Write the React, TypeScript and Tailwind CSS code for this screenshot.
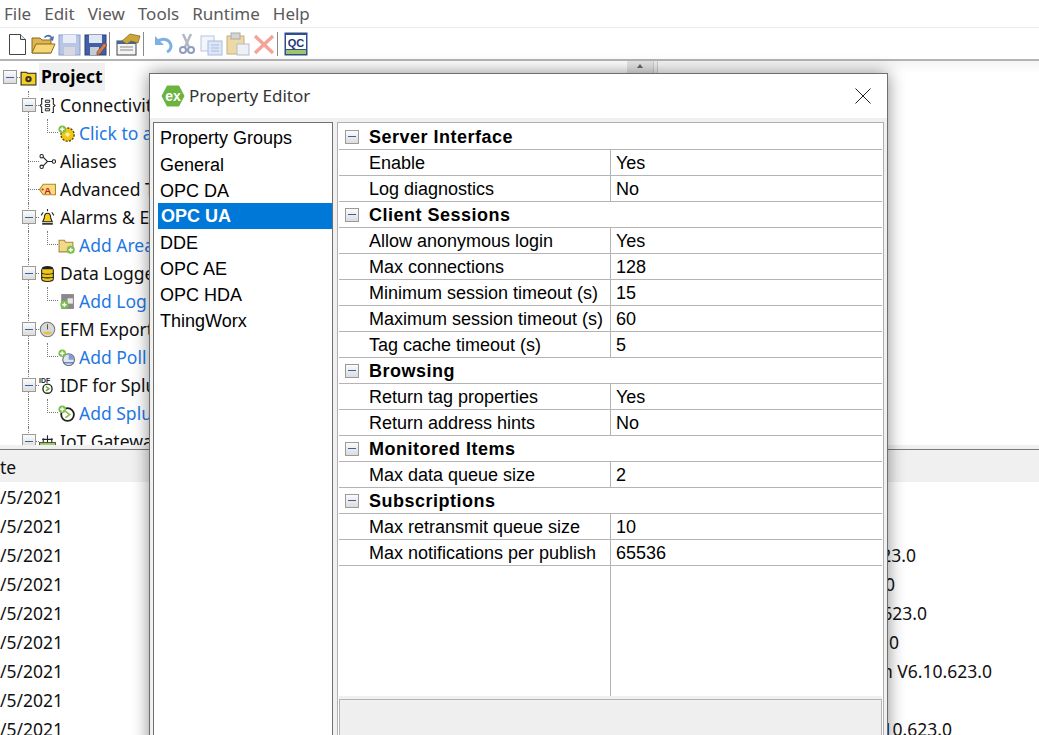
import type { ReactNode } from 'react';

const menus = ['File', 'Edit', 'View', 'Tools', 'Runtime', 'Help'];

const groups = ['General', 'OPC DA', 'OPC UA', 'DDE', 'OPC AE', 'OPC HDA', 'ThingWorx'];

const sections = [
  { title: 'Server Interface', rows: [['Enable', 'Yes'], ['Log diagnostics', 'No']] },
  {
    title: 'Client Sessions',
    rows: [
      ['Allow anonymous login', 'Yes'],
      ['Max connections', '128'],
      ['Minimum session timeout (s)', '15'],
      ['Maximum session timeout (s)', '60'],
      ['Tag cache timeout (s)', '5'],
    ],
  },
  { title: 'Browsing', rows: [['Return tag properties', 'Yes'], ['Return address hints', 'No']] },
  { title: 'Monitored Items', rows: [['Max data queue size', '2']] },
  { title: 'Subscriptions', rows: [['Max retransmit queue size', '10'], ['Max notifications per publish', '65536']] },
];

const logRows = [
  { msg: '', end: 'mr-0' },
  { msg: '', end: 'mr-0' },
  { msg: 'Runtime service started V6.10.623.0', end: 'mr-[123px]' },
  { msg: 'Configuration V6.10.623.0', end: 'mr-[144px]' },
  { msg: 'Runtime plug-in started V6.10.623.0', end: 'mr-[112px]' },
  { msg: 'Configuration V6.10.623.0', end: 'mr-[140px]' },
  { msg: 'OPC UA Server Version V6.10.623.0', end: 'mr-[47px]' },
  { msg: '', end: 'mr-0' },
  { msg: 'Runtime plug-in started V6.10.623.0', end: 'mr-[87px]' },
];

function Toggle() {
  return (
    <span className="relative z-10 flex h-[14px] w-[14px] shrink-0 items-center justify-center border border-[#9a9a9a] bg-gradient-to-b from-[#fbfbfb] to-[#dcdcdc]">
      <span className="h-px w-[8px] bg-[#3a5fa8]" />
    </span>
  );
}

function Icon({ children }: { children: ReactNode }) {
  return (
    <svg width={17} height={17} viewBox="0 0 16 16" className="shrink-0">
      {children}
    </svg>
  );
}

const AddBadge = () => (
  <>
    <circle cx="4" cy="4" r="3.6" fill="#7cc04b" />
    <path d="M4 2v4M2 4h4" stroke="#fff" strokeWidth="1.3" />
  </>
);

const treeIcons: Record<string, ReactNode> = {
  project: (
    <Icon>
      <path d="M1 3h5l1 1h8v11H1z" fill="#f5d020" stroke="#222" />
      <circle cx="8" cy="9.5" r="3" fill="#333" />
      <circle cx="8" cy="9.5" r="1" fill="#f5d020" />
    </Icon>
  ),
  conn: (
    <Icon>
      <path d="M4 1.5H2.500v5L1 8l1.500 1.500v5H4M12 1.500h1.500v5L15 8l-1.500 1.500v5H12" fill="none" stroke="#222" />
      <path d="M6 3h4v2H6zM6 7h4v2H6zM6 11h4v2H6z" fill="none" stroke="#222" strokeWidth="0.9" />
    </Icon>
  ),
  gear: (
    <Icon>
      <circle cx="9" cy="9" r="6.200" fill="#f0c814" stroke="#6a5000" strokeWidth="1.400" strokeDasharray="2 1.200" />
      <circle cx="9" cy="9" r="2" fill="#fff2a0" />
      <AddBadge />
    </Icon>
  ),
  alias: (
    <Icon>
      <path d="M3 3l5 5-5 5M8 8h5" fill="none" stroke="#222" />
      <circle cx="2.500" cy="3" r="1.600" fill="#fff" stroke="#222" />
      <circle cx="2.500" cy="13" r="1.600" fill="#fff" stroke="#222" />
      <circle cx="14" cy="8" r="1.600" fill="#fff" stroke="#222" />
    </Icon>
  ),
  tag: (
    <Icon>
      <path d="M0.500 8L4 3h11.500v10H4z" fill="#f7dd80" stroke="#b4862a" />
      <text x="5" y="12" fontSize="9" fontWeight="700" fill="#c02020" fontFamily="Liberation Sans, sans-serif">A</text>
      <circle cx="3.400" cy="8" r="1" fill="#c02020" />
    </Icon>
  ),
  bell: (
    <Icon>
      <path d="M8 4c-2.500 0-3 2-3 4.500L3.500 12h9L11 8.500C11 6 10.500 4 8 4z" fill="#f3cf1c" stroke="#222" />
      <path d="M3 14h10" stroke="#222" strokeWidth="1.500" />
      <path d="M2 6l2-3M14 6l-2-3M8 2V0" stroke="#222" />
    </Icon>
  ),
  folderAdd: (
    <Icon>
      <path d="M1 3h5l1 2h7v9H1z" fill="#f2d88b" stroke="#a88a3a" />
      <circle cx="12" cy="12" r="3.800" fill="#7cc04b" />
      <path d="M12 10v4M10 12h4" stroke="#fff" strokeWidth="1.300" />
    </Icon>
  ),
  db: (
    <Icon>
      <ellipse cx="8" cy="3.500" rx="5.500" ry="2.500" fill="#222" />
      <path d="M2.500 4v9c0 1.500 2.500 2.500 5.500 2.500s5.500-1 5.500-2.500V4" fill="#f0c814" stroke="#222" />
      <path d="M2.500 7.500c1 1.500 10 1.500 11 0M2.500 11c1 1.500 10 1.500 11 0" fill="none" stroke="#222" />
    </Icon>
  ),
  logAdd: (
    <Icon>
      <rect x="3" y="1" width="12" height="14" fill="#8a8a8a" />
      <rect x="9" y="5" width="5" height="5" fill="#e8e8e8" />
      <circle cx="6" cy="11" r="3.800" fill="#7cc04b" />
      <path d="M6 9v4M4 11h4" stroke="#fff" strokeWidth="1.300" />
    </Icon>
  ),
  gauge: (
    <Icon>
      <circle cx="8" cy="8" r="6.800" fill="#d8d8d8" stroke="#777" />
      <path d="M3.500 10a5 5 0 0 0 9 0z" fill="#e8c040" />
      <path d="M8 8V3" stroke="#555" />
    </Icon>
  ),
  pollAdd: (
    <Icon>
      <circle cx="10" cy="10" r="5.500" fill="#dfe6f2" stroke="#667" />
      <path d="M10 5v5h5a5 5 0 0 0-5-5z" fill="#7f9be0" />
      <path d="M5 13h10" stroke="#3a5fa8" />
      <AddBadge />
    </Icon>
  ),
  idf: (
    <Icon>
      <text x="0" y="5.500" fontSize="6.500" fontWeight="700" fill="#222" fontFamily="Liberation Sans, sans-serif">IDF</text>
      <circle cx="8" cy="11" r="4.300" fill="#fff" stroke="#222" strokeWidth="1.300" />
      <path d="M6.500 9l3 2-3 2" fill="none" stroke="#6aa82a" strokeWidth="1.300" />
    </Icon>
  ),
  splunkAdd: (
    <Icon>
      <circle cx="9" cy="9" r="6" fill="#fff" stroke="#222" strokeWidth="1.700" />
      <path d="M7 6l4 3-4 3" fill="none" stroke="#8cc04b" strokeWidth="1.500" />
      <AddBadge />
    </Icon>
  ),
  iot: (
    <Icon>
      <rect x="0.500" y="9" width="15" height="4" fill="#a8d060" stroke="#456" />
      <path d="M8 2v7M4 5v4M12 5v4M3 6h10" stroke="#222" />
    </Icon>
  ),
};

type TreeItem = { label: string; icon: string; level: number; toggle?: boolean; link?: boolean };

const tree: TreeItem[] = [
  { label: 'Connectivity', icon: 'conn', level: 1, toggle: true },
  { label: 'Click to add a channel.', icon: 'gear', level: 2, link: true },
  { label: 'Aliases', icon: 'alias', level: 1 },
  { label: 'Advanced Tags', icon: 'tag', level: 1 },
  { label: 'Alarms & Events', icon: 'bell', level: 1, toggle: true },
  { label: 'Add Area...', icon: 'folderAdd', level: 2, link: true },
  { label: 'Data Logger', icon: 'db', level: 1, toggle: true },
  { label: 'Add Log Group...', icon: 'logAdd', level: 2, link: true },
  { label: 'EFM Exporter', icon: 'gauge', level: 1, toggle: true },
  { label: 'Add Poll Group...', icon: 'pollAdd', level: 2, link: true },
  { label: 'IDF for Splunk', icon: 'idf', level: 1, toggle: true },
  { label: 'Add Splunk Connection...', icon: 'splunkAdd', level: 2, link: true },
  { label: 'IoT Gateway', icon: 'iot', level: 1, toggle: true },
];

function TreeRow({ item }: { item: TreeItem }) {
  if (item.level === 2) {
    return (
      <div className="relative flex h-7 items-center pl-[58px]">
        <span className="absolute left-[28px] top-0 h-full border-l border-dotted border-[#777]" />
        <span className="absolute left-[47px] top-0 h-[14px] w-[11px] border-b border-l border-dotted border-[#777]" />
        {treeIcons[item.icon]}
        <span className="ml-[4px] whitespace-nowrap text-[#1f78e4]">{item.label}</span>
      </div>
    );
  }
  return (
    <div className="relative flex h-7 items-center pl-[22px]">
      <span className="absolute left-[28px] top-0 h-full border-l border-dotted border-[#777]" />
      {item.toggle ? (
        <>
          <Toggle />
          <span className="w-[3px] border-t border-dotted border-[#777]" />
        </>
      ) : (
        <span className="ml-[6px] w-[11px] border-t border-dotted border-[#777]" />
      )}
      {treeIcons[item.icon]}
      <span className="ml-[4px] whitespace-nowrap text-[#111]">{item.label}</span>
    </div>
  );
}

function Toolbar() {
  return (
    <div className="flex h-[33px] shrink-0 items-center border-b-2 border-[#b4b4b4] bg-white pl-[8px]">
      {/* new */}
      <svg width="19" height="24" viewBox="0 0 19 24" className="shrink-0">
        <path d="M1.500 2.500h11l5 5v15h-16z" fill="#fff" stroke="#444" />
        <path d="M12.500 2.500v5h5" fill="#dfe6ee" stroke="#444" />
      </svg>
      {/* open */}
      <svg width="25" height="24" viewBox="0 0 25 24" className="ml-[4px] shrink-0">
        <path d="M1 6h8l2 2h9v13H1z" fill="#e0b450" stroke="#8a6a20" />
        <path d="M1 21l4-9h19l-4 9z" fill="#f6d778" stroke="#8a6a20" />
        <path d="M13 5c3-3 6-3 8 0l2-1-1 5-4-2 2-1c-2-2-4-2-6 0z" fill="#4a6ea8" />
      </svg>
      {/* save */}
      <svg width="23" height="24" viewBox="0 0 23 24" className="ml-[2px] shrink-0">
        <rect x="1" y="3" width="21" height="20" fill="#b8c6e6" stroke="#8a9cc8" />
        <rect x="5" y="3" width="13" height="8" fill="#e8edf8" />
        <rect x="6" y="15" width="11" height="8" fill="#d8d8e0" />
      </svg>
      {/* save as */}
      <svg width="23" height="24" viewBox="0 0 23 24" className="ml-[3px] shrink-0">
        <rect x="1" y="3" width="21" height="20" fill="#3f5fa8" stroke="#2a3f78" />
        <rect x="5" y="3" width="13" height="8" fill="#dfe6f4" />
        <rect x="6" y="15" width="9" height="8" fill="#c8ccd4" />
        <path d="M13 20l7-9 3 2-7 9-3 1z" fill="#d8794a" stroke="#6a3a20" strokeWidth="0.600" />
      </svg>
      <span className="ml-[2px] h-[24px] w-px bg-[#8a8a8a]" />
      {/* properties */}
      <svg width="25" height="24" viewBox="0 0 25 24" className="ml-[6px] shrink-0">
        <rect x="1" y="9" width="19" height="14" fill="#f4f4f4" stroke="#444" />
        <path d="M1 9h19v3H1z" fill="#44659c" />
        <path d="M4 15h13M4 18h13" stroke="#888" />
        <path d="M6 9l8-7 10 2-2 7-7-2-4 3z" fill="#c9a53a" stroke="#7a6010" strokeWidth="0.700" />
      </svg>
      <span className="ml-[2px] h-[24px] w-px bg-[#8a8a8a]" />
      {/* undo */}
      <svg width="20" height="24" viewBox="0 0 20 24" className="ml-[10px] shrink-0">
        <path d="M3 10c5-5 13-3 14 4 0 3-2 5-4 6" fill="none" stroke="#7fb0e4" strokeWidth="3" />
        <path d="M1 4v9h9z" fill="#7fb0e4" />
      </svg>
      {/* cut */}
      <svg width="16" height="24" viewBox="0 0 16 24" className="ml-[5px] shrink-0">
        <path d="M4 2l6 13M12 2L6 15" stroke="#b4b8c2" strokeWidth="2.500" />
        <circle cx="4" cy="18" r="3" fill="none" stroke="#8d9cc0" strokeWidth="2" />
        <circle cx="12" cy="18" r="3" fill="none" stroke="#8d9cc0" strokeWidth="2" />
      </svg>
      {/* copy */}
      <svg width="23" height="24" viewBox="0 0 23 24" className="ml-[5px] shrink-0">
        <rect x="1" y="4" width="13" height="15" fill="#f2f5fb" stroke="#b8c4dc" />
        <rect x="8" y="9" width="14" height="14" fill="#dde6f6" stroke="#a8bce0" />
        <path d="M11 13h8M11 16h8M11 19h8" stroke="#a8bce0" />
      </svg>
      {/* paste */}
      <svg width="24" height="24" viewBox="0 0 24 24" className="ml-[3px] shrink-0">
        <rect x="1" y="4" width="17" height="18" fill="#ecd9a6" stroke="#c4b07c" />
        <rect x="5" y="1" width="9" height="6" fill="#d4d4d4" stroke="#aaa" />
        <rect x="11" y="12" width="12" height="11" fill="#eef0f4" stroke="#b4bccc" />
      </svg>
      {/* delete */}
      <svg width="22" height="24" viewBox="0 0 22 24" className="ml-[3px] shrink-0">
        <path d="M2 4l18 17M20 4L2 21" stroke="#f4a49a" strokeWidth="3.500" />
      </svg>
      <span className="ml-[2px] h-[24px] w-px bg-[#8a8a8a]" />
      {/* quick client */}
      <svg width="24" height="24" viewBox="0 0 24 24" className="ml-[6px] shrink-0">
        <rect x="0.500" y="0.500" width="23" height="23" fill="#2e4f8c" />
        <rect x="2" y="3" width="20" height="14" fill="#fff" />
        <text x="12" y="14.500" textAnchor="middle" fontSize="11" fontWeight="700" fill="#1c3a78" fontFamily="Liberation Sans, sans-serif">QC</text>
        <rect x="2" y="18" width="20" height="4" fill="#9fc46a" />
      </svg>
    </div>
  );
}

function PropertyDialog() {
  return (
    <div className="absolute left-[149px] top-[73px] flex h-[680px] w-[739px] flex-col border border-[#6e6e6e] bg-[#f0f0f0] shadow-[0_0_16px_rgba(0,0,0,0.45)] [font-family:'Liberation_Sans',sans-serif]">
      <div className="flex h-[44px] shrink-0 items-center bg-white pl-[11px] pr-[16px]">
        <svg width="24" height="24" viewBox="0 0 24 24" className="shrink-0">
          <path d="M6 1.500h12L23.500 12 18 22.500H6L0.500 12z" fill="#6cb33f" />
          <text x="12" y="16.500" textAnchor="middle" fontSize="14" fontWeight="700" fill="#fff" fontFamily="Liberation Sans, sans-serif">ex</text>
        </svg>
        <span className="ml-[4px] text-[17px] text-[#333] [font-family:'Noto_Sans',sans-serif]">Property Editor</span>
        <svg width="16" height="16" viewBox="0 0 16 16" className="ml-auto shrink-0">
          <path d="M0.500 0.500l15 15M15.500 0.500l-15 15" stroke="#222" strokeWidth="1" />
        </svg>
      </div>
      <div className="flex min-h-0 flex-1 pl-[3px] pr-[3px] pt-[4px] text-[18px] text-black">
        <div className="w-[180px] shrink-0 border border-[#707070] bg-white pl-[4px] pt-[2px]">
          <div className="flex h-[26px] items-center pl-[2px] pt-[1px]">Property Groups</div>
          {groups.map((g) => (
            <div
              key={g}
              className={
                g === 'OPC UA'
                  ? 'flex h-[26px] items-center bg-[#0078d7] pl-[3px] pt-[1px] font-bold text-white'
                  : 'flex h-[26px] items-center pl-[2px] pt-[3px]'
              }
            >
              {g}
            </div>
          ))}
        </div>
        <div className="ml-[4px] flex min-w-0 flex-1 flex-col border border-[#b0b0b0] bg-white pl-px pr-px pt-px">
          {sections.map((s) => (
            <div key={s.title}>
              <div className="flex h-[26px] items-center border-b border-[#b4b4b4] pl-[6px]">
                <Toggle />
                <span className="ml-[10px] pt-[2px] font-bold tracking-[0.5px]">{s.title}</span>
              </div>
              {s.rows.map(([k, v]) => (
                <div key={k} className="flex h-[26px] border-b border-[#b4b4b4]">
                  <div className="flex w-[271px] shrink-0 items-center pl-[30px] pt-[2px]">{k}</div>
                  <div className="flex flex-1 items-center border-l border-[#b4b4b4] pl-[5px] pt-[2px]">{v}</div>
                </div>
              ))}
            </div>
          ))}
          <div className="h-[130px] w-[272px] shrink-0 border-r border-[#b4b4b4]" />
          <div className="flex-1 bg-[#f0f0f0] pt-[3px]">
            <div className="h-full border border-[#b4b4b4] bg-[#efefef]" />
          </div>
        </div>
      </div>
    </div>
  );
}

export default function App() {
  return (
    <div className="relative flex h-[735px] w-[1039px] flex-col overflow-hidden bg-white text-[17.5px] text-[#111] [font-family:'Noto_Sans',sans-serif]">
      <div className="flex h-[28px] shrink-0 items-center gap-[13px] border-b border-[#ececec] pl-[4px] text-[17px] text-[#5a5a5a]">
        {menus.map((m) => (
          <span key={m}>{m}</span>
        ))}
      </div>
      <Toolbar />
      <div className="flex h-[384px] shrink-0 overflow-hidden">
        <div className="relative w-[653px] shrink-0 overflow-hidden pt-[2px]">
          <div className="relative flex h-7 items-center pl-[3px]">
            <Toggle />
            <span className="w-[3px] border-t border-dotted border-[#777]" />
            {treeIcons.project}
            <span className="ml-[2px] bg-[#f0f0f0] px-[2px] pb-[2px] font-bold leading-[26px] text-black">Project</span>
          </div>
          {tree.map((item) => (
            <TreeRow key={item.label} item={item} />
          ))}
          <span className="absolute right-0 top-0 flex h-[12px] w-[26px] items-start justify-center bg-[#e6e6e6]">
            <span className="mt-[3px] border-x-[3px] border-b-[4px] border-x-transparent border-b-[#666]" />
          </span>
        </div>
        <div className="w-[5px] shrink-0 border-x border-[#cfcfcf] bg-[#f0f0f0]" />
        <div className="flex-1 bg-gradient-to-b from-[#f4f4f4] to-white to-[12px]" />
      </div>
      <div className="h-[5px] shrink-0 border-b border-[#7a7a7a] bg-[#f0f0f0]" />
      <div className="min-h-0 flex-1">
        <div className="flex h-[32px] items-center bg-[#f0f0f0] pt-[3px]">te</div>
        <div className="pt-px">
          {logRows.map((r, i) => (
            <div key={i} className="flex h-[29px] items-center justify-between whitespace-nowrap">
              <span>/5/2021</span>
              <span className={r.end}>{r.msg}</span>
            </div>
          ))}
        </div>
      </div>
      <PropertyDialog />
    </div>
  );
}
